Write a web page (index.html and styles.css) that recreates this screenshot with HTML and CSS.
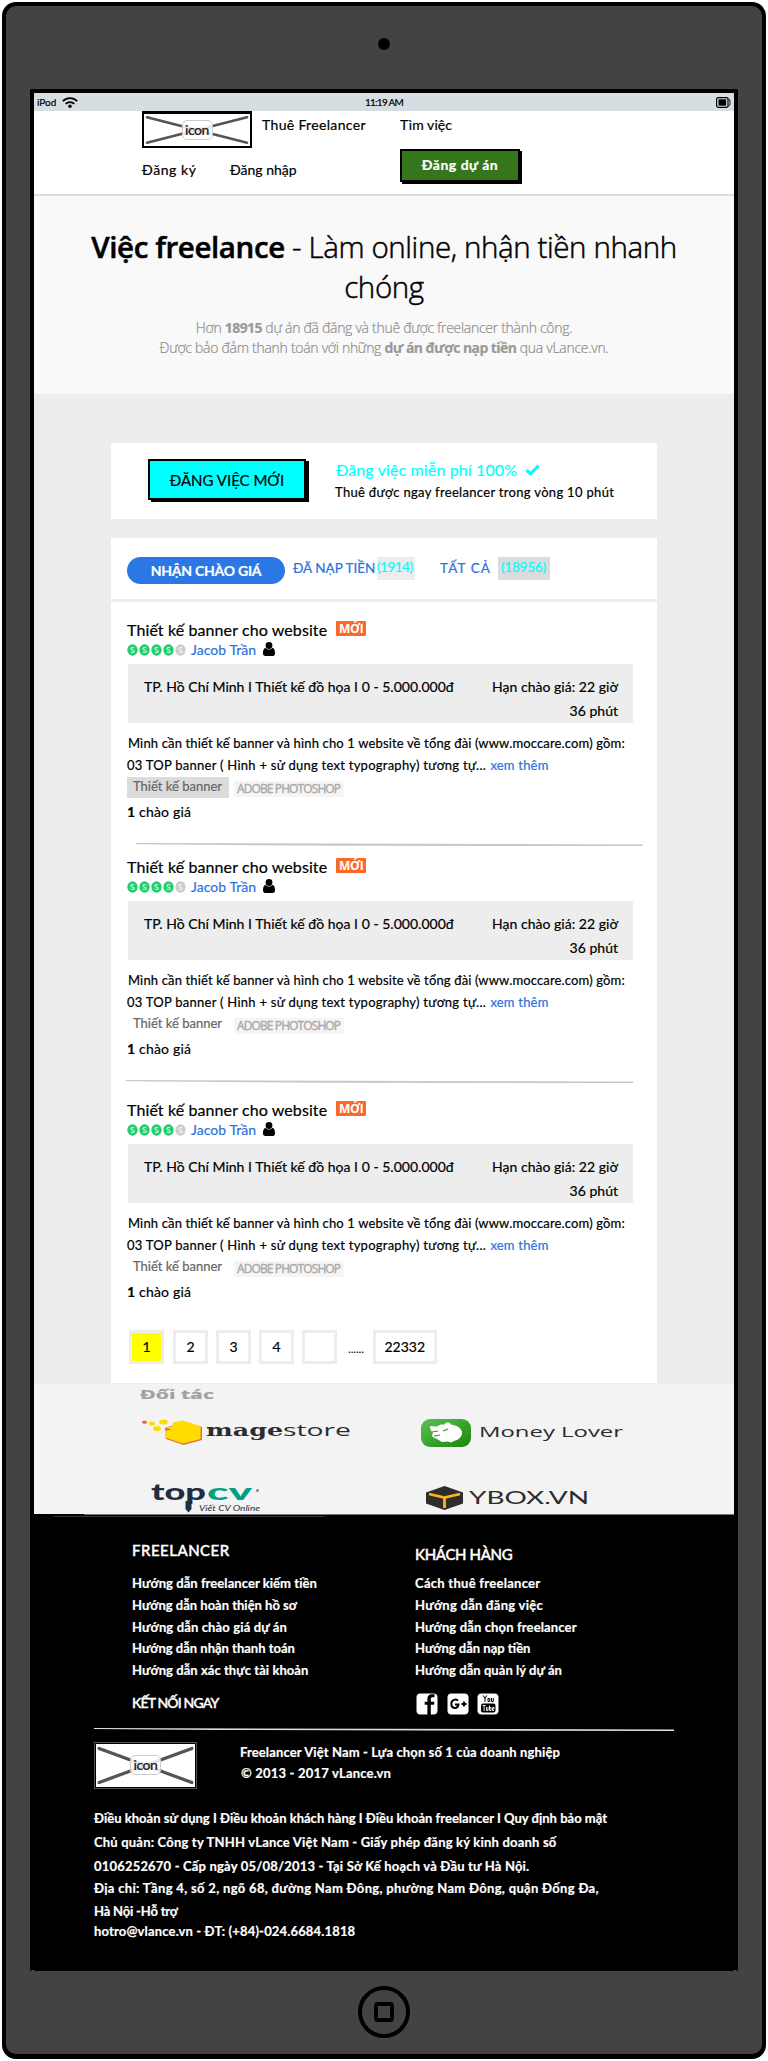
FILE: index.html
```html
<!DOCTYPE html>
<html lang="vi">
<head>
<meta charset="utf-8">
<title>vLance</title>
<link rel="stylesheet" href="styles.css">
</head>
<body>
<svg class="defs" width="0" height="0">
  <symbol id="coin" viewBox="0 0 11 12"><ellipse cx="5.5" cy="6" rx="5.2" ry="5.7"/><path d="M7.3 4.1C6.4 3.3 3.9 3.3 3.9 4.8S7.2 6 7.2 7.4 4.700 8.800 3.700 7.900" fill="none" stroke="#fff" stroke-opacity=".8" stroke-width="1.100"/></symbol>
  <symbol id="user" viewBox="0 0 12 14"><circle cx="6" cy="3.500" r="3.400"/><path d="M2.600 5.800C.6 6.600 0 8.500 0 11.300 0 13 .8 14 2.300 14H9.700C11.200 14 12 13 12 11.300 12 8.500 11.400 6.600 9.400 5.800 8.600 7 7.400 7.600 6 7.600S3.400 7 2.600 5.800Z"/></symbol>
  <symbol id="cross" viewBox="0 0 106 34" preserveAspectRatio="none"><path d="M3 3.500L103 30.500M3 30.500L103 3.500" stroke="#555" stroke-width="2.600" stroke-linecap="round"/></symbol>
</svg>
<div class="device">
  <div class="camera"></div>
  <div class="screen">
    <div class="status">
      <span class="carrier">iPod</span>
      <svg class="wifi" width="16" height="11" viewBox="0 0 16 11"><g fill="none" stroke="#000" stroke-width="1.800"><path d="M.8 4.200C4.800 0 11.200 0 15.200 4.200"/><path d="M3.700 6.900C6 4.500 10 4.500 12.300 6.900"/></g><circle cx="8" cy="9.200" r="1.700"/></svg>
      <span class="time">11:19 AM</span>
      <svg class="battery" width="15" height="11" viewBox="0 0 15 11"><rect x=".6" y=".7" width="11.400" height="9.600" rx="1.500" fill="none" stroke="#000" stroke-width="1.200"/><rect x="2.500" y="2.300" width="7.600" height="6.400"/><path d="M12.500 1.500C14.600 3 14.600 8 12.500 9.500" fill="none" stroke="#000"/></svg>
    </div>
    <header class="header">
      <div class="logo"><svg><use href="#cross"/></svg><span>icon</span></div>
      <a class="nav thue">Thuê Freelancer</a>
      <a class="nav tim">Tìm việc</a>
      <a class="nav low ky">Đăng ký</a>
      <a class="nav low nhap">Đăng nhập</a>
      <a class="post">Đăng dự án</a>
    </header>
    <section class="hero">
      <h1><b>Việc freelance</b> <span>- Làm online, nhận tiền nhanh<br>chóng</span></h1>
      <p class="p1">Hơn <b>18915</b> dự án đã đăng và thuê được freelancer thành công.</p>
      <p class="p2">Được bảo đảm thanh toán với những <b>dự án được nạp tiền</b> qua vLance.vn.</p>
    </section>
    <main class="main">
      <section class="card cta">
        <a class="new">ĐĂNG VIỆC MỚI</a>
        <div class="pitch">
          <div class="free"><span>Đăng việc miễn phí 100%</span><svg width="15" height="12" viewBox="0 0 15 12"><path d="M1.500 6L5.500 9.800 13.500 1.600" fill="none" stroke="#0ff" stroke-width="3.200"/></svg></div>
          <div class="fast">Thuê được ngay freelancer trong vòng 10 phút</div>
        </div>
      </section>
      <section class="card jobs">
        <div class="tabs">
          <span class="pill">NHẬN CHÀO GIÁ</span>
          <span class="tab paid">ĐÃ NẠP TIỀN</span><span class="count">(1914)</span>
          <span class="tab all">TẤT CẢ</span><span class="count dark">(18956)</span>
        </div>
        <article class="job">
          <h2><span>Thiết kế banner cho website</span><em>MỚI</em></h2>
          <div class="owner"><svg class="coins" width="59" height="12"><g fill="#1fcf6d"><use href="#coin" width="11" height="12"/><use href="#coin" x="12" width="11" height="12"/><use href="#coin" x="24" width="11" height="12"/><use href="#coin" x="36" width="11" height="12"/></g><use href="#coin" x="48" width="11" height="12" fill="#ccc"/></svg><a>Jacob Trần</a><svg width="12" height="14"><use href="#user"/></svg></div>
          <div class="info"><span>TP. Hồ Chí Minh I Thiết kế đồ họa I 0 - 5.000.000đ</span><span class="due">Hạn chào giá: 22 giờ<br>36 phút</span></div>
          <p class="desc"><span class="d1">Mình cần thiết kế banner và hình cho 1 website về tổng đài (www.moccare.com) gồm:</span><br><span class="d2">03 TOP banner ( Hình + sử dụng text typography) tương tự...</span> <a>xem thêm</a></p>
          <div class="tags"><span class="tag on">Thiết kế banner</span><span class="adobe">ADOBE PHOTOSHOP</span></div>
          <div class="bids"><b>1</b> chào giá</div>
        </article>
        <svg class="rule" width="507" height="3" viewBox="0 0 507 3"><path d="M0 0L507 1.500V3L200 2.800L0 1.300Z" fill="#c8c8c8"/></svg>
        <article class="job second">
          <h2><span>Thiết kế banner cho website</span><em>MỚI</em></h2>
          <div class="owner"><svg class="coins" width="59" height="12"><g fill="#1fcf6d"><use href="#coin" width="11" height="12"/><use href="#coin" x="12" width="11" height="12"/><use href="#coin" x="24" width="11" height="12"/><use href="#coin" x="36" width="11" height="12"/></g><use href="#coin" x="48" width="11" height="12" fill="#ccc"/></svg><a>Jacob Trần</a><svg width="12" height="14"><use href="#user"/></svg></div>
          <div class="info"><span>TP. Hồ Chí Minh I Thiết kế đồ họa I 0 - 5.000.000đ</span><span class="due">Hạn chào giá: 22 giờ<br>36 phút</span></div>
          <p class="desc"><span class="d1">Mình cần thiết kế banner và hình cho 1 website về tổng đài (www.moccare.com) gồm:</span><br><span class="d2">03 TOP banner ( Hình + sử dụng text typography) tương tự...</span> <a>xem thêm</a></p>
          <div class="tags"><span class="tag">Thiết kế banner</span><span class="adobe">ADOBE PHOTOSHOP</span></div>
          <div class="bids"><b>1</b> chào giá</div>
        </article>
        <svg class="rule left" width="507" height="3" viewBox="0 0 507 3"><path d="M0 0L507 1.500V3L200 2.800L0 1.300Z" fill="#c8c8c8"/></svg>
        <article class="job third">
          <h2><span>Thiết kế banner cho website</span><em>MỚI</em></h2>
          <div class="owner"><svg class="coins" width="59" height="12"><g fill="#1fcf6d"><use href="#coin" width="11" height="12"/><use href="#coin" x="12" width="11" height="12"/><use href="#coin" x="24" width="11" height="12"/><use href="#coin" x="36" width="11" height="12"/></g><use href="#coin" x="48" width="11" height="12" fill="#ccc"/></svg><a>Jacob Trần</a><svg width="12" height="14"><use href="#user"/></svg></div>
          <div class="info"><span>TP. Hồ Chí Minh I Thiết kế đồ họa I 0 - 5.000.000đ</span><span class="due">Hạn chào giá: 22 giờ<br>36 phút</span></div>
          <p class="desc"><span class="d1">Mình cần thiết kế banner và hình cho 1 website về tổng đài (www.moccare.com) gồm:</span><br><span class="d2">03 TOP banner ( Hình + sử dụng text typography) tương tự...</span> <a>xem thêm</a></p>
          <div class="tags"><span class="tag">Thiết kế banner</span><span class="adobe">ADOBE PHOTOSHOP</span></div>
          <div class="bids"><b>1</b> chào giá</div>
        </article>
        <nav class="pages"><a class="cur">1</a><a>2</a><a>3</a><a>4</a><a></a><span>......</span><a class="last">22332</a></nav>
      </section>
    </main>
    <section class="partners">
      <h3>Đối tác</h3>
      <div class="brands">
        <svg width="210" height="34" viewBox="0 0 210 34">
          <g fill="#e8703a"><path d="M23 14L41.500 7.500 60 13V26L41.500 31 24 25Z"/><ellipse cx="2.500" cy="8.200" rx="2.500" ry="1.700"/></g>
          <g fill="#ffdc00"><path d="M31 8.500L40.500 6.500 58.500 12V25L41 29.500 23 23.500V17L30 15.500 24 13.500 30 12.500Z"/><ellipse cx="10" cy="9.500" rx="3" ry="2"/><ellipse cx="21.500" cy="8" rx="4.300" ry="2.600"/><ellipse cx="15" cy="14.500" rx="4" ry="2.600"/></g>
          <text class="slab" x="64" y="21.500" font-size="16" font-weight="700" textLength="77" lengthAdjust="spacingAndGlyphs">mage</text>
          <text class="open" x="141" y="21.500" font-size="16" textLength="68" lengthAdjust="spacingAndGlyphs">store</text>
        </svg>
        <svg width="210" height="34" viewBox="0 0 210 34">
          <defs><linearGradient id="g" x2="1" y2="1"><stop stop-color="#5cc152"/><stop offset="1" stop-color="#1b860b"/></linearGradient></defs>
          <rect y="5" width="50" height="28" rx="9" fill="url(#g)"/>
          <path d="M9 12L16 12.500C19 10 22 10.500 24 10.200 24 8 29 8 30 10.500 36 11.500 41 14 41 19 41 23 37 26 34 26.500L30 28.500 27 27.500 21 28 15 24.500C12 24 10 22 12 19 10 17 9 15 9 12Z" fill="#fff"/>
          <path d="M11 18L17 17M13 22L19 21M22 17L27 15" stroke="#2a961e" stroke-width="1.200"/>
          <text class="open" x="58" y="22.500" font-size="15" font-weight="500" textLength="144" lengthAdjust="spacingAndGlyphs">Money Lover</text>
        </svg>
        <svg width="210" height="38" viewBox="0 0 210 38">
          <text class="lato" x="9" y="24" font-size="22" font-weight="900" fill="#1f2e40" textLength="55" lengthAdjust="spacingAndGlyphs">top</text>
          <path d="M43.500 25h6v8l-3 3.500-3-3.500Z" fill="#1f2e40"/>
          <text class="lato" x="65" y="24" font-size="22" font-weight="900" fill="#00a083" textLength="45" lengthAdjust="spacingAndGlyphs">cv</text>
          <circle cx="115.500" cy="14.500" r="1.500" fill="#888"/>
          <text class="lato" x="57" y="35" font-size="7" fill="#1f2e40" font-style="italic" textLength="61" lengthAdjust="spacingAndGlyphs">Viết CV Online</text>
        </svg>
        <svg width="210" height="38" viewBox="0 0 210 38">
          <path d="M5 16.500L23.500 10 42 16.500V27.500L23.500 34 5 27.500Z" fill="#2d2d2d"/>
          <path d="M8 18L23.500 21.500 39 18M23.500 21.500V32" fill="none" stroke="#fdb515" stroke-width="2.800"/>
          <text class="lato" x="48" y="28" font-size="17" textLength="120" lengthAdjust="spacingAndGlyphs">YBOX.VN</text>
        </svg>
      </div>
    </section>
    <footer class="footer">
      <svg class="edge" width="700" height="3"><path d="M50 .5H590M590 .5H700" stroke="#777"/><path d="M20 2.500H290" stroke="#333"/></svg>
      <div class="cols">
        <div class="col">
          <h4>FREELANCER</h4>
          <ul><li class="a1">Hướng dẫn freelancer kiếm tiền</li><li>Hướng dẫn hoàn thiện hồ sơ</li><li class="a3">Hướng dẫn chào giá dự án</li><li>Hướng dẫn nhận thanh toán</li><li class="a1">Hướng dẫn xác thực tài khoản</li></ul>
          <h5>KẾT NỐI NGAY</h5>
        </div>
        <div class="col right">
          <h4>KHÁCH HÀNG</h4>
          <ul><li class="b1">Cách thuê freelancer</li><li class="b1">Hướng dẫn đăng việc</li><li class="a3">Hướng dẫn chọn freelancer</li><li>Hướng dẫn nạp tiền</li><li class="a1">Hướng dẫn quản lý dự án</li></ul>
          <div class="social">
            <svg width="22" height="22" viewBox="0 0 22 22"><rect x=".5" y=".5" width="21" height="21" rx="4" fill="#fff"/><path d="M18.500 4.200H16.500C15.200 4.200 14.800 4.900 14.800 6.200V8.800H18.400L18 11.800H14.800V22H11.400V11.800H8.700V8.800H11.400V5.800C11.400 2.800 13 1.300 15.800 1.300H18.500Z"/></svg>
            <svg width="22" height="22" viewBox="0 0 22 22"><rect x=".5" y=".5" width="21" height="21" rx="4" fill="#fff"/><path d="M11 7.700C9.200 5.500 4.300 6.400 4.300 11S10.500 17 11.500 11.500H8M14.500 11h5M17 8.500v5" fill="none" stroke="#000" stroke-width="1.900"/></svg>
            <svg width="22" height="22" viewBox="0 0 22 22"><rect x=".5" y=".5" width="21" height="21" rx="4" fill="#fff"/><rect x="4" y="10.500" width="14.500" height="9" rx="2"/><path d="M6.300 2.500L8 5.500M9.700 2.500L8 5.500V9M11 5.500h1.800V8.500H11ZM14.500 5v3.500h1.800V5" fill="none" stroke="#000"/><path d="M5.500 12.500h3.200M7.100 12.500V18M9.500 14v3.500h1.500V14M12.500 12.500v5H14v-3H12.500M17 17.500h-1.500V14.500H17V16H15.500" fill="none" stroke="#fff" stroke-width=".9"/></svg>
          </div>
        </div>
      </div>
      <svg class="frule" width="580" height="3" viewBox="0 0 580 3"><path d="M0 0L580 1.500V3L120 2L0 1Z" fill="#ddd"/></svg>
      <div class="about">
        <div class="logo flogo"><svg><use href="#cross"/></svg><span>icon</span></div>
        <div class="who"><div class="w1">Freelancer Việt Nam - Lựa chọn số 1 của doanh nghiệp</div><div class="w2">© 2013 - 2017 vLance.vn</div></div>
      </div>
      <div class="legal">
        <div class="l1">Điều khoản sử dụng I Điều khoản khách hàng I Điều khoản freelancer I Quy định bảo mật</div>
        <div class="l2">Chủ quản: Công ty TNHH vLance Việt Nam - Giấy phép đăng ký kinh doanh số</div>
        <div class="l3">0106252670 - Cấp ngày 05/08/2013 - Tại Sở Kế hoạch và Đầu tư Hà Nội.</div>
        <div class="l4">Địa chỉ: Tầng 4, số 2, ngõ 68, đường Nam Đông, phường Nam Đông, quận Đống Đa,</div>
        <div class="l5">Hà Nội -Hỗ trợ</div>
        <div class="l6">hotro@vlance.vn - ĐT: (+84)-024.6684.1818</div>
      </div>
    </footer>
  </div>
  <div class="home"><i></i></div>
</div>
</body>
</html>
```
FILE: styles.css
```css
*{box-sizing:border-box;margin:0;padding:0}
html{background:#fff}
body{width:768px;height:2061px;padding:2px;font:14px/22px Lato,"Noto Sans",sans-serif;color:#000;white-space:nowrap;overflow:hidden;-webkit-text-stroke:.2px}
svg{display:block;flex:none}
.defs{position:absolute}
.device{height:2057px;background:#434343;border:4px solid #000;border-bottom-width:5px;border-radius:14px;display:flex;flex-direction:column;align-items:center}
.camera{width:12px;height:12px;border-radius:50%;background:#000;margin:32px 0 39px}
.screen{width:708px;height:1882px;border:4px solid #000;border-bottom:1px solid #777;border-radius:2px 2px 0 0;flex:none;background:#ededed}

.status{height:18px;background:#d7dee1;display:flex;align-items:center;padding:0 3px;font-size:10px;line-height:16px}
.carrier{width:25px}
.time{margin-left:287px;letter-spacing:-.75px;flex:1}

.header{height:85px;background:#fff;border-bottom:2px solid #dcdcdc;padding-left:108px;display:grid;grid-template-columns:88px 32px 138px 1fr;grid-template-rows:37.500px 44px;align-items:start;justify-items:start}
.logo{grid-column:1/3;width:110px;height:36.500px;border:2px solid #000;border-top-width:3px;display:grid;place-items:center;background:#fff}
.logo svg,.logo span{grid-area:1/1}
.logo svg{width:106px;height:32px}
.logo span{width:31px;height:20px;line-height:18px;text-align:center;border:1px solid #ccc;border-radius:5px;background:rgba(255,255,255,.85);letter-spacing:-.5px;color:#222;font-weight:500}
.nav{line-height:28px}
.thue{letter-spacing:.34px}
.tim{letter-spacing:.09px}
.low{line-height:42px}
.ky{grid-column:1;letter-spacing:.58px}
.nhap{grid-column:2/4}
.post{grid-column:4;width:120px;height:33px;border:2px solid #000;box-shadow:2px 2px 0 #000;background:#35761c;color:#fff;font-weight:700;letter-spacing:.5px;line-height:28px;text-align:center}

.hero{height:198px;background:#f9f9f9;padding-top:31px;text-align:center;font-family:"Open Sans",sans-serif}
.hero h1{font-size:29.500px;line-height:40px;font-weight:300;letter-spacing:-.39px;-webkit-text-stroke:.5px}
.hero h1 b{font-weight:600}
.hero p{font-size:14px;line-height:20px;font-weight:300;color:#8c8c8c;letter-spacing:-.29px}
.hero p b{letter-spacing:-.55px;color:#999;font-weight:700}
.hero .p1{margin-top:10.500px}

.main{height:989.500px;padding:49px 77px 0}
.card{background:#fff}
.cta{height:75.500px;display:flex;padding:16px 0 0 37px}
.new{width:158px;height:41px;background:#0ff;border:2px solid #000;box-shadow:3px 2px 0 #000;text-align:center;font-size:15px;line-height:38px}
.pitch{margin-left:29px}
.free{display:flex;gap:8px;color:#0ff;font-size:16px;line-height:20px;letter-spacing:.13px;padding-left:1px}
.free svg{margin-top:5px}
.free span{margin-top:1px}
.fast{font-size:13px;line-height:24px;letter-spacing:.32px}
.jobs{height:845px;margin-top:19.500px;padding:0 14px 0 16px}
.tabs{display:flex;height:64px;margin:0 -14px 0 -16px;padding:19px 0 0 16px;border-bottom:3px solid #ededed;font-size:13.500px;color:#2a72e0}
.pill{width:158px;height:27px;border-radius:13.500px;background:#2b78e4;color:#fff;text-align:center;font-weight:700;font-size:14px;line-height:28px;letter-spacing:-.23px}
.tab{line-height:22px}
.paid{margin-left:8px;width:84px}
.all{margin-left:25px;width:58px;letter-spacing:1.100px}
.count{width:38px;height:23px;background:#ededed;color:#0ff;line-height:21px;letter-spacing:-.5px}
.dark{width:52px;background:#dcdcdc;letter-spacing:-.23px;padding-left:3px}
.job{padding-top:15.500px}
.job h2{display:flex;font-size:16px;font-weight:400;line-height:24px;letter-spacing:.1px;height:24px}
.job em{margin:3.500px 0 0 9px;width:30px;height:15px;background:#f9692a;color:#fff;font:700 12px/15px "Open Sans",sans-serif;text-align:center;border-radius:1px;letter-spacing:-.3px;-webkit-text-stroke:0}
.owner{display:flex;height:16px;line-height:16px;color:#2a72e0;letter-spacing:.05px}
.coins{margin-top:2px}
.owner a{margin:0 7px 0 5px}
.owner>svg:last-child{fill:#000}
.info{display:flex;justify-content:space-between;margin:6.500px 10px 0 1px;height:59px;padding:10.500px 15px 0 16px;background:#ededed;line-height:24px;letter-spacing:.02px}
.due{text-align:right}
.desc{margin-top:9px;font-size:13px;line-height:22px}
.d1{letter-spacing:.15px;padding-left:1px}
.d2{letter-spacing:.26px}
.desc a{color:#2a72e0;letter-spacing:.2px;padding-left:1px}
.tags{display:flex;margin-top:1px;height:21px;font-size:13px;line-height:19px;color:#666}
.tag{width:102px;padding-left:6px}
.on{background:#dcdcdc}
.adobe{margin:4px 0 0 5px;width:110px;height:16px;background:#f5f5f5;color:#aaa;font:12px/15px "Open Sans",sans-serif;letter-spacing:-.89px;padding-left:3px;-webkit-text-stroke:.4px}
.bids{margin-top:2.500px;letter-spacing:.19px}
.rule{margin:20.500px 0 0 9px}
.left{margin-left:-1px}
.second{padding-top:8.500px}
.third{padding-top:14.500px}
.pages{display:flex;margin:27px 0 0 2px;align-items:flex-start}
.pages a{width:35px;height:34px;border:3px solid #ededed;text-align:center;line-height:27px;margin-right:8px}
.pages .cur{background:#ff0;margin-right:9px}
.pages span{font-size:12px;line-height:38px;margin:0 9px 0 3px;letter-spacing:-.2px;-webkit-text-stroke:0}
.pages .last{width:64px}

.partners{height:130.500px;background:#f3f3f3;padding:1px 0 0 106px}
.partners h3{font:700 12.500px/20px "Open Sans",sans-serif;color:#a0a0a0;transform:scaleX(1.700);transform-origin:0 0;width:50px;height:22px}
.brands{display:grid;grid-template-columns:279px 1fr;margin-left:2px;row-gap:28px;margin-top:7px}
.brands text{fill:#2c2c2c}
.brands text[fill="#1f2e40"]{fill:#1f2e40}
.brands text[fill="#00a083"]{fill:#00a083}
.open{font-family:"Open Sans",sans-serif}
.slab{font-family:"DejaVu Serif",serif}
.lato{font-family:Lato,sans-serif}

.footer{height:457px;background:#000;color:#fff}
.edge{height:3px}
.cols{display:grid;grid-template-columns:283px 1fr;padding:20.500px 0 0 98px;height:211px}
.footer h4{font-size:15px;font-weight:500;line-height:24px;letter-spacing:.49px;margin-bottom:11.500px;-webkit-text-stroke:.4px}
.right h4{padding-top:4px;height:28px;letter-spacing:-.35px;margin-bottom:7.500px}
.footer ul{list-style:none;font-size:13px;font-weight:700;line-height:21.800px}
.a1{letter-spacing:.06px}.a3{letter-spacing:.14px}.b1{letter-spacing:.28px}
.footer h5{font-size:14px;font-weight:500;letter-spacing:-.84px;line-height:22px;margin-top:10.500px;-webkit-text-stroke:.4px}
.social{display:flex;margin:11px 0 0 1px;gap:8px}
.social svg:first-child{margin-right:1px}
.frule{margin:0 0 0 60px}
.about{display:flex;padding:10.500px 0 0 60px;height:62px}
.flogo{width:103px;height:47px;border:2px solid #000;outline:1px solid #555;outline-offset:-1px}
.flogo svg{width:99px;height:43px}
.who{margin-left:43px;font-size:13px;font-weight:700;line-height:21.500px}
.w1{letter-spacing:.12px}.w2{letter-spacing:.2px;padding-left:1px}
.legal{padding:13.500px 0 0 60px;font-size:13px;font-weight:700}
.legal div{height:24px}
.l1{letter-spacing:.02px}.l2{letter-spacing:.2px}.l3{letter-spacing:.19px}.l4{letter-spacing:.32px}.l5{letter-spacing:-.18px}.l6{letter-spacing:.16px}
.legal .l3{height:22.500px}.legal .l4{height:23px}.legal .l5{height:20px}
.home{width:52px;height:52px;border:4px solid #000;border-radius:50%;margin-top:15px;display:grid;place-items:center;flex:none}
.home i{width:20px;height:20px;border:4px solid #000;border-radius:4px}
```
